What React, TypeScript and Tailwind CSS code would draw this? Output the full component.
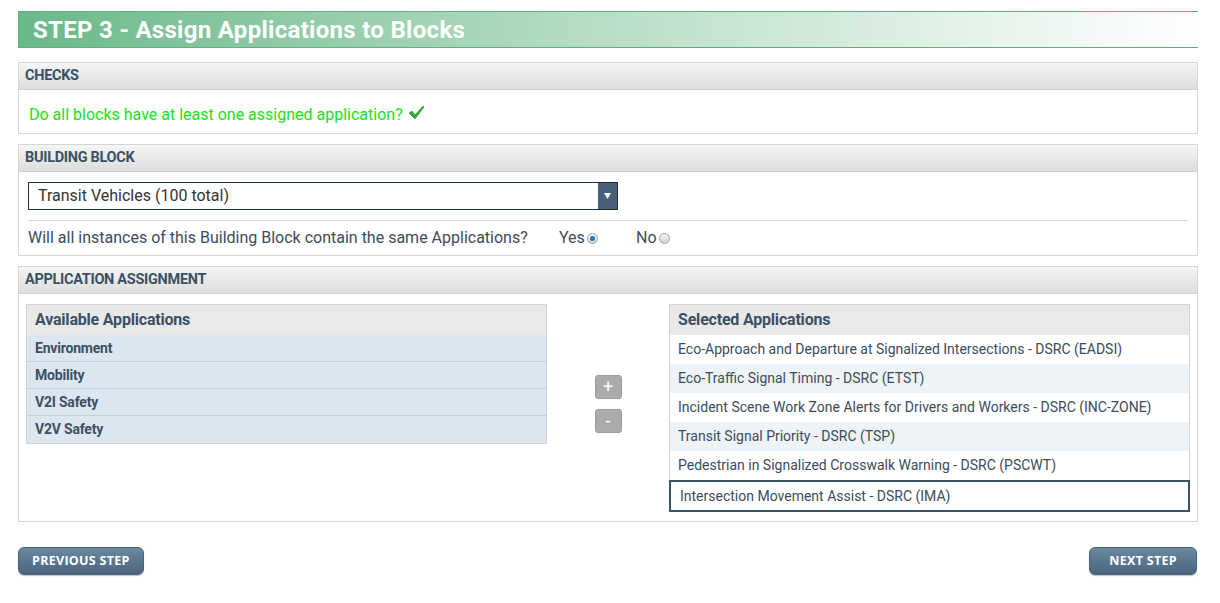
import React, { useState } from 'react';

const available = ['Environment', 'Mobility', 'V2I Safety', 'V2V Safety'];

const selected = [
    'Eco-Approach and Departure at Signalized Intersections - DSRC (EADSI)',
    'Eco-Traffic Signal Timing - DSRC (ETST)',
    'Incident Scene Work Zone Alerts for Drivers and Workers - DSRC (INC-ZONE)',
    'Transit Signal Priority - DSRC (TSP)',
    'Pedestrian in Signalized Crosswalk Warning - DSRC (PSCWT)',
    'Intersection Movement Assist - DSRC (IMA)',
];

function Panel({ title, children }: { title: string; children: React.ReactNode }) {
    return (
        <div className="border border-[#d6d6d6] bg-white">
            <div className="h-[27px] flex items-center px-[6px] bg-gradient-to-b from-[#f4f5f5] to-[#dcdddd] border-b border-[#d0d0d0] text-[14.5px] font-bold text-[#3c5064] tracking-[-0.3px]">
                {title}
            </div>
            {children}
        </div>
    );
}

function Radio({ checked }: { checked: boolean }) {
    return (
        <span className="inline-block w-[11px] h-[11px] rounded-full border border-[#9aa3ab] bg-gradient-to-b from-[#f6f6f6] to-[#d4d4d4] relative ml-[2px]">
            {checked && <span className="absolute left-[2px] top-[2px] w-[5px] h-[5px] rounded-full bg-[#1d78c4]" />}
        </span>
    );
}

function StepButton({ children, wide }: { children: React.ReactNode; wide?: boolean }) {
    return (
        <button
            className={`h-[28px] ${wide ? 'px-[19px]' : 'px-[13px]'} rounded-[6px] bg-gradient-to-b from-[#6b889f] to-[#4a667f] border border-[#4a6378] text-white text-[12.5px] font-bold tracking-[0.3px] shadow-[0_1px_1px_rgba(0,0,0,0.25)]`}
            style={{ fontFamily: '"Open Sans", sans-serif' }}
        >
            {children}
        </button>
    );
}

function App() {
    const [sel, setSel] = useState(5);
    return (
        <div className="w-[1220px] h-[603px] bg-white text-[#3c4c5c] px-[18px] pt-[11px]" style={{ fontFamily: 'Roboto, "Noto Sans", sans-serif' }}>
            {/* step banner */}
            <div className="w-[1180px] h-[37px] flex items-center pl-[14px] border-y border-l border-[#5db07f] bg-gradient-to-r from-[#6ab98a] via-[#b9dec7] to-white text-white text-[24px] font-bold tracking-[0.3px]">
                STEP 3 - Assign Applications to Blocks
            </div>

            <div className="mt-[14px] flex flex-col gap-[10px] w-[1180px]">
                <Panel title="CHECKS">
                    <div className="h-[43px] flex items-center pt-[6px] px-[10px] text-[16px] text-[#22e022]">
                        Do all blocks have at least one assigned application?
                        <svg width="17" height="15" viewBox="0 0 17 15" className="ml-[5px] -mt-[4px]">
                            <path d="M1 8 L4 6 L7 10 L15 1 L16 2 L7 14 Z" fill="#3aa63a" stroke="#2e8b2e" strokeWidth="0.6" />
                        </svg>
                    </div>
                </Panel>

                <Panel title="BUILDING BLOCK">
                    <div className="px-[9px] pt-[10px]">
                        <div className="w-[590px] h-[28px] border border-[#1e2e3a] flex items-stretch">
                            <div className="flex-1 flex items-center pl-[9px] text-[16px] text-[#333]">Transit Vehicles (100 total)</div>
                            <div className="w-[19px] bg-[#4a6079] flex items-center justify-center">
                                <svg width="7" height="6" viewBox="0 0 7 6"><path d="M0 0 H7 L3.5 6 Z" fill="white" /></svg>
                            </div>
                        </div>
                        <div className="mt-[10px] border-t border-[#d8d8d8] h-[35px] flex items-center text-[16px] text-[#3c4c5c]">
                            <span className="w-[531px]">Will all instances of this Building Block contain the same Applications?</span>
                            <span className="flex items-center w-[77px]">Yes<Radio checked={true} /></span>
                            <span className="flex items-center">No<Radio checked={false} /></span>
                        </div>
                    </div>
                </Panel>

                <Panel title="APPLICATION ASSIGNMENT">
                    <div className="flex items-start pl-[7px] pr-[7px] pt-[10px] pb-[9px]">
                        <div className="w-[521px] border border-[#d4d4d4]">
                            <div className="h-[30px] flex items-center px-[8px] bg-[#e9e9e9] text-[16px] font-bold text-[#3c5064] tracking-[-0.2px]">Available Applications</div>
                            {available.map((a, i) => (
                                <div key={a} className={`h-[27px] flex items-center px-[8px] bg-[#dce6f0] text-[14px] font-bold text-[#3c5064] tracking-[-0.2px] ${i < available.length - 1 ? 'border-b border-[#c6ced6]' : ''}`}>
                                    {a}
                                </div>
                            ))}
                        </div>
                        <div className="w-[122px] flex flex-col items-center gap-[10px] pt-[71px]">
                            <button className="w-[27px] h-[24px] rounded-[3px] bg-[#ababab] border border-[#9e9e9e] text-white text-[18px] leading-none flex items-center justify-center">+</button>
                            <button className="w-[27px] h-[24px] rounded-[3px] bg-[#ababab] border border-[#9e9e9e] text-white text-[18px] leading-none flex items-center justify-center">-</button>
                        </div>
                        <div className="w-[521px] border border-[#d4d4d4]">
                            <div className="h-[30px] flex items-center px-[8px] bg-[#e9e9e9] text-[16px] font-bold text-[#3c5064] tracking-[-0.2px]">Selected Applications</div>
                            {selected.map((s, i) => (
                                <div
                                    key={s}
                                    onClick={() => setSel(i)}
                                    className={
                                        i === sel
                                            ? 'h-[32px] flex items-center px-[9px] bg-white border-2 border-[#3c5366] text-[14px] text-[#3c4c5c] -mx-[1px] -mb-[1px]'
                                            : `h-[29px] flex items-center px-[8px] text-[14px] text-[#3c4c5c] ${i % 2 === 1 ? 'bg-[#eef3f8]' : 'bg-white'}`
                                    }
                                >
                                    {s}
                                </div>
                            ))}
                        </div>
                    </div>
                </Panel>
            </div>

            <div className="mt-[25px] w-[1179px] flex justify-between">
                <StepButton>PREVIOUS STEP</StepButton>
                <StepButton wide>NEXT STEP</StepButton>
            </div>
        </div>
    );
}

export default App;
